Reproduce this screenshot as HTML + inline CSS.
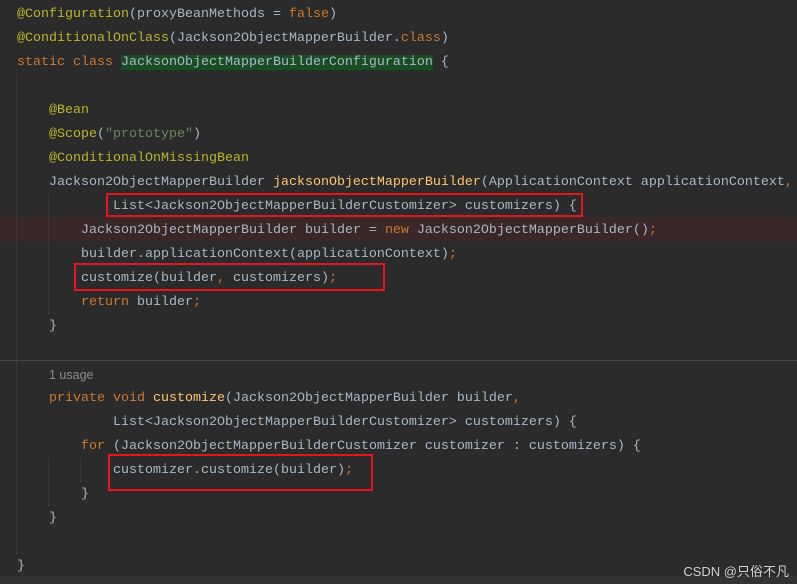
<!DOCTYPE html>
<html><head><meta charset="utf-8"><style>
html,body{margin:0;padding:0;}
body{width:797px;height:584px;background:#2b2b2b;position:relative;overflow:hidden;font-family:"Liberation Mono",monospace;font-size:13.33px;color:#a9b7c6;}
.l{position:absolute;left:0;height:24px;line-height:24px;white-space:pre;}
.a{color:#bbb529}.k{color:#cc7832}.m{color:#ffc66d}.s{color:#6a8759}
.hl{background:#1b4d24}
.box{position:absolute;border:2px solid #e5141d;box-sizing:border-box;}
.g{position:absolute;width:1px;background:#393939;}
</style></head><body>
<div style="position:absolute;left:0;top:217px;width:797px;height:24px;background:#3a2727"></div>
<div style="position:absolute;left:0;top:360px;width:797px;height:1px;background:#454545"></div>
<div style="position:absolute;left:0;top:576px;width:797px;height:8px;background:#313335"></div>
<div class="g" style="left:16px;top:74px;height:480px"></div>
<div class="g" style="left:48px;top:194px;height:120px"></div>
<div class="g" style="left:48px;top:458px;height:48px"></div>
<div class="g" style="left:80px;top:458px;height:24px"></div>

<div class="l" style="top:3px;left:17px"><span class="a">@Configuration</span>(proxyBeanMethods = <span class="k">false</span>)</div>
<div class="l" style="top:27px;left:17px"><span class="a">@ConditionalOnClass</span>(Jackson2ObjectMapperBuilder.<span class="k">class</span>)</div>
<div class="l" style="top:51px;left:17px"><span class="k">static class </span><span class="hl">JacksonObjectMapperBuilderConfiguration</span> {</div>
<div class="l" style="top:99px;left:49px"><span class="a">@Bean</span></div>
<div class="l" style="top:123px;left:49px"><span class="a">@Scope</span>(<span class="s">"prototype"</span>)</div>
<div class="l" style="top:147px;left:49px"><span class="a">@ConditionalOnMissingBean</span></div>
<div class="l" style="top:171px;left:49px">Jackson2ObjectMapperBuilder <span class="m">jacksonObjectMapperBuilder</span>(ApplicationContext applicationContext<span class="k">,</span></div>
<div class="l" style="top:195px;left:113px">List&lt;Jackson2ObjectMapperBuilderCustomizer&gt; customizers) {</div>
<div class="l" style="top:219px;left:81px">Jackson2ObjectMapperBuilder builder = <span class="k">new </span>Jackson2ObjectMapperBuilder()<span class="k">;</span></div>
<div class="l" style="top:243px;left:81px">builder.applicationContext(applicationContext)<span class="k">;</span></div>
<div class="l" style="top:267px;left:81px">customize(builder<span class="k">, </span>customizers)<span class="k">;</span></div>
<div class="l" style="top:291px;left:81px"><span class="k">return </span>builder<span class="k">;</span></div>
<div class="l" style="top:315px;left:49px">}</div>
<div class="l" style="top:363px;left:49px;font-family:'Liberation Sans',sans-serif;font-size:12.5px;color:#8c8c8c">1 usage</div>
<div class="l" style="top:387px;left:49px"><span class="k">private void </span><span class="m">customize</span>(Jackson2ObjectMapperBuilder builder<span class="k">,</span></div>
<div class="l" style="top:411px;left:113px">List&lt;Jackson2ObjectMapperBuilderCustomizer&gt; customizers) {</div>
<div class="l" style="top:435px;left:81px"><span class="k">for </span>(Jackson2ObjectMapperBuilderCustomizer customizer : customizers) {</div>
<div class="l" style="top:459px;left:113px">customizer.customize(builder)<span class="k">;</span></div>
<div class="l" style="top:483px;left:81px">}</div>
<div class="l" style="top:507px;left:49px">}</div>
<div class="l" style="top:555px;left:17px">}</div>

<div class="box" style="left:106px;top:193px;width:477px;height:24px"></div>
<div class="box" style="left:74px;top:263px;width:311px;height:28px"></div>
<div class="box" style="left:108px;top:454px;width:265px;height:37px"></div>

<div style="position:absolute;right:8px;top:561px;font-family:'Liberation Sans','Noto Sans CJK SC',sans-serif;font-size:13px;color:#d0d0d0">CSDN @只俗不凡</div>
</body></html>
